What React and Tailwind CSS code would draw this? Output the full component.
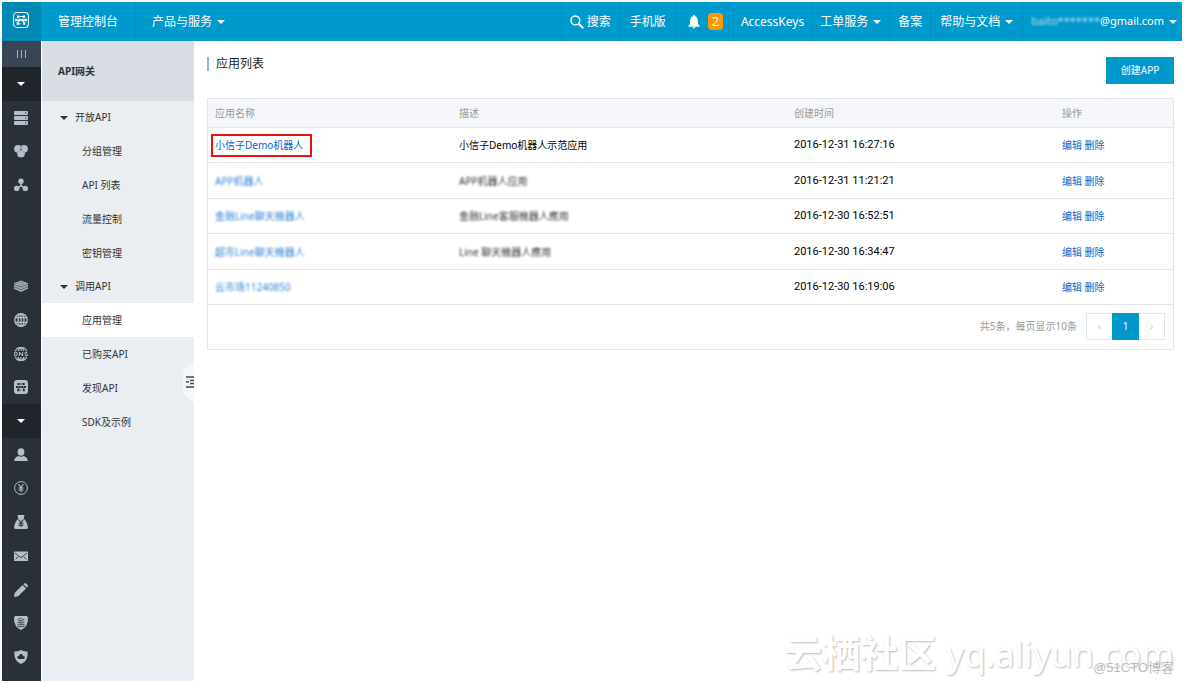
import React from 'react'
import clsx from 'clsx'

const APPS = [
  { name: '小信子Demo机器人', desc: '小信子Demo机器人示范应用', created: '2016-12-31 16:27:16', marked: true },
  { name: 'APP机器人', desc: 'APP机器人应用', created: '2016-12-31 11:21:21', hidden: true },
  { name: '金融Line聊天機器人', desc: '金融Line客服機器人應用', created: '2016-12-30 16:52:51', hidden: true },
  { name: '超市Line聊天機器人', desc: 'Line 聊天機器人應用', created: '2016-12-30 16:34:47', hidden: true },
  { name: '云市场11240850', desc: '', created: '2016-12-30 16:19:06', hidden: true },
]

const MENU = [
  { title: '开放API', items: ['分组管理', 'API 列表', '流量控制', '密钥管理'] },
  { title: '调用API', items: ['应用管理', '已购买API', '发现API', 'SDK及示例'] },
]

const ACTIVE = '应用管理'

function Icon({ children, className = 'size-[14px]' }) {
  return (
    <svg viewBox="0 0 14 14" className={className} fill="currentColor" aria-hidden="true">
      {children}
    </svg>
  )
}

function Caret({ className }) {
  return (
    <svg viewBox="0 0 8 4" className={clsx('h-1 w-2 shrink-0', className)} fill="currentColor" aria-hidden="true">
      <path d="M0 0h8L4 4z" />
    </svg>
  )
}

/* ── Rail icons ─────────────────────────────────────────────────── */
const Servers = () => (
  <Icon>
    <path fillRule="evenodd" d="M1 0h12q1 0 1 1v2q0 1-1 1H1Q0 4 0 3V1q0-1 1-1zm10 1.5v1h1.4v-1zM1 5h12q1 0 1 1v2q0 1-1 1H1Q0 9 0 8V6q0-1 1-1zm10 1.5v1h1.4v-1zM1 10h12q1 0 1 1v2q0 1-1 1H1q-1 0-1-1v-2q0-1 1-1zm10 1.5v1h1.4v-1z" />
  </Icon>
)

const Clusters = () => (
  <Icon>
    <circle cx="4" cy="4.800" r="3.900" />
    <circle cx="10" cy="4.800" r="3.900" />
    <circle cx="7" cy="9.400" r="3.900" />
    <circle cx="7" cy="5.600" r=".9" className="text-[#2a3038]" fill="currentColor" />
    <path d="M5 3.400 7 2.600l2 .8M3.600 8l1.800-.4M10.400 8l-1.800-.4" className="text-[#6f7a86]" stroke="currentColor" strokeWidth=".6" fill="none" />
  </Icon>
)

const Nodes = () => (
  <Icon>
    <circle cx="7" cy="3.300" r="2.700" />
    <circle cx="2.700" cy="10.400" r="2.700" />
    <circle cx="11.300" cy="10.400" r="2.700" />
    <path d="M7 4v3.600L3 10.400M7 7.600l4 2.800" stroke="currentColor" strokeWidth="1.400" fill="none" />
  </Icon>
)

const Layers = () => (
  <Icon>
    <path d="M7 1.500 14 4.300v5.400L7 13 0 9.700V4.300z" opacity=".85" />
    <path d="M0 5.200 7 8.200l7-3M0 7.700l7 3 7-3" className="text-[#4d5864]" stroke="currentColor" strokeWidth=".8" fill="none" />
    <ellipse cx="7" cy="4.600" rx="3" ry="1.300" className="text-[#6f7a86]" fill="none" stroke="currentColor" strokeWidth=".7" />
  </Icon>
)

const Globe = () => (
  <Icon>
    <g fill="none" stroke="currentColor" strokeWidth="1.400">
      <circle cx="7" cy="7" r="6.200" />
      <ellipse cx="7" cy="7" rx="3" ry="6.200" />
      <path d="M1.500 4.600h11M1.500 9.400h11M7 .8v12.400" />
    </g>
  </Icon>
)

const Dns = () => (
  <Icon>
    <g fill="none" stroke="currentColor" strokeWidth="1.200">
      <path d="M1.200 4.200a6.300 6.300 0 0 1 11.600 0M1.200 9.800a6.300 6.300 0 0 0 11.600 0M7 .8v3.200M7 10v3.200M4 4q.6-2 2-3M10 4q-.6-2-2-3M4 10q.6 2 2 3M10 10q-.6 2-2 3" />
      <path d="M.7 5.200v3.600h.8Q3.400 8.800 3.400 7T1.500 5.200zM5.400 9V5l3.200 4V5M13.300 5.400h-1.600q-1 .1-1 .8t1 .8h.9q1 .1 1 .9t-1 .8h-1.900" strokeWidth="1" />
    </g>
  </Icon>
)

// linked dots in the shape of the gateway mark
const GatewayGlyph = () => (
  <>
    <path d="M4 4h6M2.500 7h3.200M8.300 7h3.200M5.700 7h2.600M5.400 7 3.800 10.200h3M8.400 7l2 3.200" strokeWidth=".9" />
    <path d="M3.400 4h2M8.600 4h2M2 7h2M5 7h1.600M7.400 7H9M10 7h2M3.200 10.200h2M8.800 10.200h2" strokeWidth="2" />
  </>
)

const Gateway = () => (
  <Icon>
    <rect width="14" height="14" rx="3" />
    <g className="text-[#2a3038]" stroke="currentColor" fill="none"><GatewayGlyph /></g>
  </Icon>
)

const Person = () => (
  <Icon>
    <ellipse cx="7" cy="4" rx="3.400" ry="3.800" />
    <path d="M4.600 8q2.400 1.600 4.800 0 4.200 1.200 4.400 5H.2q.2-3.800 4.400-5z" />
  </Icon>
)

const YenCoin = () => (
  <Icon>
    <circle cx="7" cy="7" r="6.400" fill="none" stroke="currentColor" />
    <path d="M4.500 3 7 6.500 9.500 3M7 6.500V11M4.500 7h5M4.500 9h5" fill="none" stroke="currentColor" strokeWidth="1.100" />
  </Icon>
)

const MoneyBag = () => (
  <Icon>
    <path d="M3.500 0h7l-.8 3.600q3.800 4 4.300 9.400l-1 1H1l-1-1q.5-5.400 4.300-9.400z" />
    <path d="M4.500 4.500 7 7.500l2.500-3M7 7.500V12M4.500 8.300h5M4.500 10.200h5" className="text-[#2a3038]" fill="none" stroke="currentColor" strokeWidth="1.100" />
  </Icon>
)

const Mail = () => (
  <Icon>
    <rect y="2.500" width="14" height="9.500" rx=".6" />
    <path d="M1 4l4 3.400Q7 9.800 9 7.400L13 4M1.500 10.400l2.500-2.500M12.500 10.400 10 7.900" className="text-[#2a3038]" fill="none" stroke="currentColor" strokeWidth=".9" />
  </Icon>
)

const Pencil = () => (
  <Icon>
    <path d="m0 14 .8-4.200L8.600 2l3.400 3.400-7.800 7.800zM9.400 1.200l.8-.8q.9-.7 1.800 0L13.600 2q.7.9 0 1.800l-.8.8z" />
  </Icon>
)

const ShieldList = () => (
  <Icon>
    <path d="M1 0h12q1 1 1 2.500Q14 11 7 14 0 11 0 2.500 0 1 1 0z" />
    <path d="M3.500 3.800 5.600 2l4.800 1.800M4.200 4.800h5.600M3.300 6.500h7.400M4 8.300h6v2.400H4zM7 6.500v4M4.500 3.800l2.500 1" className="text-[#2a3038]" fill="none" stroke="currentColor" strokeWidth=".7" />
  </Icon>
)

const ShieldCloud = () => (
  <Icon>
    <path d="M7 0q3 1.500 6.500 1.500Q14.500 11 7 14-.5 11 .5 1.500 4 1.500 7 0z" />
    <path d="M4.800 9Q3 8.700 3.200 7.100 3.500 5.900 4.900 5.900 5.500 4 7.200 4.100 8.900 4.200 9.200 5.900q1.600 0 1.700 1.500Q10.800 8.800 9.400 9z" className="text-[#2a3038]" fill="currentColor" />
  </Icon>
)

const RAIL_TOP = [
  { label: '云服务器', icon: Servers },
  { label: '数据库', icon: Clusters },
  { label: '负载均衡', icon: Nodes },
]

const RAIL_MID = [
  { label: '存储', icon: Layers },
  { label: 'CDN', icon: Globe },
  { label: 'DNS', icon: Dns },
  { label: 'API网关', icon: Gateway },
]

const RAIL_BOTTOM = [
  { label: '账号', icon: Person },
  { label: '费用', icon: YenCoin },
  { label: '续费', icon: MoneyBag },
  { label: '消息', icon: Mail },
  { label: '工单', icon: Pencil },
  { label: '备案', icon: ShieldList },
  { label: '安全', icon: ShieldCloud },
]

function RailToggle({ label }) {
  return (
    <button aria-label={label} className="flex w-full flex-1 items-center justify-center bg-[#20252c] pr-px text-white">
      <Caret />
    </button>
  )
}

function RailLinks({ items }) {
  return items.map(({ label, icon: Glyph }) => (
    <a key={label} href="#" aria-label={label} className="flex w-full flex-1 items-center justify-center pr-px">
      <Glyph />
    </a>
  ))
}

function Rail() {
  return (
    <nav className="flex w-[39px] shrink-0 flex-col bg-[#2a3038] pb-[7px] text-[#b4bfca]">
      <button aria-label="折叠" className="flex h-[26px] shrink-0 items-center justify-center bg-[#394555] pr-px">
        <svg viewBox="0 0 11 8" className="h-2 w-[11px]" stroke="#a6b0bd" aria-hidden="true">
          <path d="M1.500 0v8M5.500 0v8M9.500 0v8" />
        </svg>
      </button>
      <RailToggle label="产品与服务" />
      <RailLinks items={RAIL_TOP} />
      <div className="flex-[2]" />
      <RailLinks items={RAIL_MID} />
      <RailToggle label="用户中心" />
      <RailLinks items={RAIL_BOTTOM} />
    </nav>
  )
}

/* ── Top bar ────────────────────────────────────────────────────── */
function TopItem({ children, className = 'px-2' }) {
  return (
    <a href="#" className={clsx('flex items-center border-l border-[#008fc0]', className)}>
      {children}
    </a>
  )
}

function TopBar() {
  return (
    <header className="flex h-[39px] bg-[#0099cc] text-xs text-white">
      <a href="#" aria-label="首页" className="flex w-[39px] items-center justify-center bg-[#0087b4] pr-px pb-1">
        <Icon className="size-4">
          <rect x=".5" y=".5" width="13" height="13" rx="3" fill="none" stroke="currentColor" strokeWidth=".9" />
          <g stroke="currentColor" fill="none"><GatewayGlyph /></g>
        </Icon>
      </a>
      <a href="#" className="flex items-center border-r border-[#008fc0] px-[17px]">管理控制台</a>
      <button className="flex items-center gap-[5px] px-4">
        产品与服务
        <Caret />
      </button>

      <div className="ml-auto flex">
        <TopItem className="gap-[3px] px-2">
          <Icon>
            <circle cx="5.400" cy="5.400" r="4.400" fill="none" stroke="currentColor" strokeWidth="1.500" />
            <path d="m8.600 8.600 4.600 4.600" stroke="currentColor" strokeWidth="2" />
          </Icon>
          搜索
        </TopItem>
        <TopItem className="px-[10px]">手机版</TopItem>
        <TopItem className="gap-[7px] px-[10px]">
          <Icon>
            <path d="M7 0q1 0 1 1.200 2.800.8 2.800 4.300 0 3 .7 4.300l1 1.200v.8H1.500V11l1-1.200q.7-1.300.7-4.300Q3.200 2 6 1.200 6 0 7 0zM5.500 12.200h3Q8 13.400 7 13.400t-1.500-1.200z" />
          </Icon>
          <span className="flex h-[17px] w-[15px] items-center justify-center rounded bg-[#ff9900]">2</span>
        </TopItem>
        <TopItem className="px-[7px]">AccessKeys</TopItem>
        <TopItem className="gap-[5px] px-2">工单服务<Caret /></TopItem>
        <TopItem>备案</TopItem>
        <TopItem className="gap-[5px] px-[9px]">帮助与文档<Caret /></TopItem>
        <TopItem className="gap-[5px] pr-[5px] pl-2 text-[11px]">
          <span>
            <span className="opacity-70 blur-[1px]">baito*******</span>@gmail.com
          </span>
          <Caret />
        </TopItem>
      </div>
    </header>
  )
}

function Sidebar() {
  return (
    <aside className="relative ml-px w-[152px] shrink-0 bg-[#eaedf1] text-[10px] text-[#333]">
      <h2 className="flex h-[60px] items-center bg-[#d9dde4] pl-4 font-bold">API网关</h2>
      {MENU.map((group) => (
        <section key={group.title}>
          <button className="flex h-[33px] w-full items-center gap-[7px] pl-[18px]">
            <Caret />
            {group.title}
          </button>
          <ul>
            {group.items.map((item) => (
              <li key={item}>
                <a href="#" className={clsx('flex h-[34px] items-center pl-10', item === ACTIVE && 'bg-white')}>
                  {item}
                </a>
              </li>
            ))}
          </ul>
        </section>
      ))}
      {/* collapse handle */}
      <button aria-label="收起菜单" className="absolute top-[320px] right-0">
        <svg viewBox="0 0 11 42" className="h-[42px] w-[11px]" aria-hidden="true">
          <path d="M11 0v42L0 32V10z" fill="#f7f7f7" />
          <path d="M3 16h8M7 19.500h4M7 22.500h4M3 26h8M3 21h3" stroke="#3f4b63" strokeWidth="1.300" />
        </svg>
      </button>
    </aside>
  )
}

function AppTable() {
  return (
    <div className="border border-[#e1e6eb]">
      <table className="w-full table-fixed text-left text-[10px]">
        <thead>
          <tr className="h-7 border-b border-[#e1e6eb] bg-[#f5f6fa] text-[#999]">
            <th className="w-[244px] pt-[2px] pl-[7px] font-normal">应用名称</th>
            <th className="pt-[2px] pl-[7px] font-normal">描述</th>
            <th className="w-[274px] pt-[2px] pl-[7px] font-normal">创建时间</th>
            <th className="w-28 pt-[2px] pl-px font-normal">操作</th>
          </tr>
        </thead>
        <tbody>
          {APPS.map((app) => (
            <tr key={app.created} className="h-[35px] border-b border-[#e1e6eb] text-black even:h-9">
              <td className="pt-[2px] pl-[7px]">
                <a
                  href="#"
                  className={clsx(
                    'inline-block text-[#0066cc]',
                    app.hidden && 'opacity-80 blur-[1px]',
                    app.marked && '-ml-1 border-2 border-[#ee1111] py-[2px] pr-[7px] pl-[2px]'
                  )}
                >
                  {app.name}
                </a>
              </td>
              <td className="pt-[2px] pl-[7px]">
                <span className={clsx('inline-block', app.hidden && 'opacity-80 blur-[1px]')}>{app.desc}</span>
              </td>
              <td className="pt-[2px] pl-[7px] font-[Roboto] text-[11px]">{app.created}</td>
              <td className="pt-[2px] pl-px text-[#0066cc]">
                <a href="#">编辑</a> <a href="#">删除</a>
              </td>
            </tr>
          ))}
        </tbody>
      </table>

      <div className="flex h-11 items-center justify-end gap-[9px] pr-2 text-[10px] text-[#999]">
        <span>共5条，每页显示10条</span>
        <div className="flex h-[27px] border border-[#e1e6eb]">
          <button aria-label="上一页" className="w-[25px] text-[#ccc]">‹</button>
          <button className="-my-px w-[27px] bg-[#0099cc] text-white">1</button>
          <button aria-label="下一页" className="w-[25px] text-[#ccc]">›</button>
        </div>
      </div>
    </div>
  )
}

export default function App() {
  return (
    <div className="flex min-h-screen flex-col bg-white p-[2px] font-['Noto_Sans','Noto_Sans_CJK_SC',sans-serif]">
      <TopBar />
      <div className="flex flex-1">
        <Rail />
        <Sidebar />
        <main className="relative min-w-0 flex-1 pt-4 pr-2 pl-[13px]">
          <div className="mb-[14px] flex justify-between">
            <h1 className="flex h-[14px] items-center border-l-2 border-[#88b7e0] pl-[7px] text-xs leading-3 text-[#222]">应用列表</h1>
            <button className="h-[27px] w-[68px] bg-[#0099cc] text-[10px] text-white">创建APP</button>
          </div>
          <AppTable />

          {/* watermarks over the empty canvas */}
          <p className="absolute right-2 bottom-0 flex items-baseline gap-[10px] text-[35px] whitespace-nowrap text-white [text-shadow:1px_1px_2px_#bbb]">
            <span className="text-[38px] font-bold">云栖社区</span>
            <span>yq.aliyun.com</span>
          </p>
          <p className="absolute right-2 bottom-1 font-['Liberation_Sans','Noto_Sans_CJK_SC',sans-serif] text-[13px] text-[#bbb]">
            @51CTO博客
          </p>
        </main>
      </div>
    </div>
  )
}
